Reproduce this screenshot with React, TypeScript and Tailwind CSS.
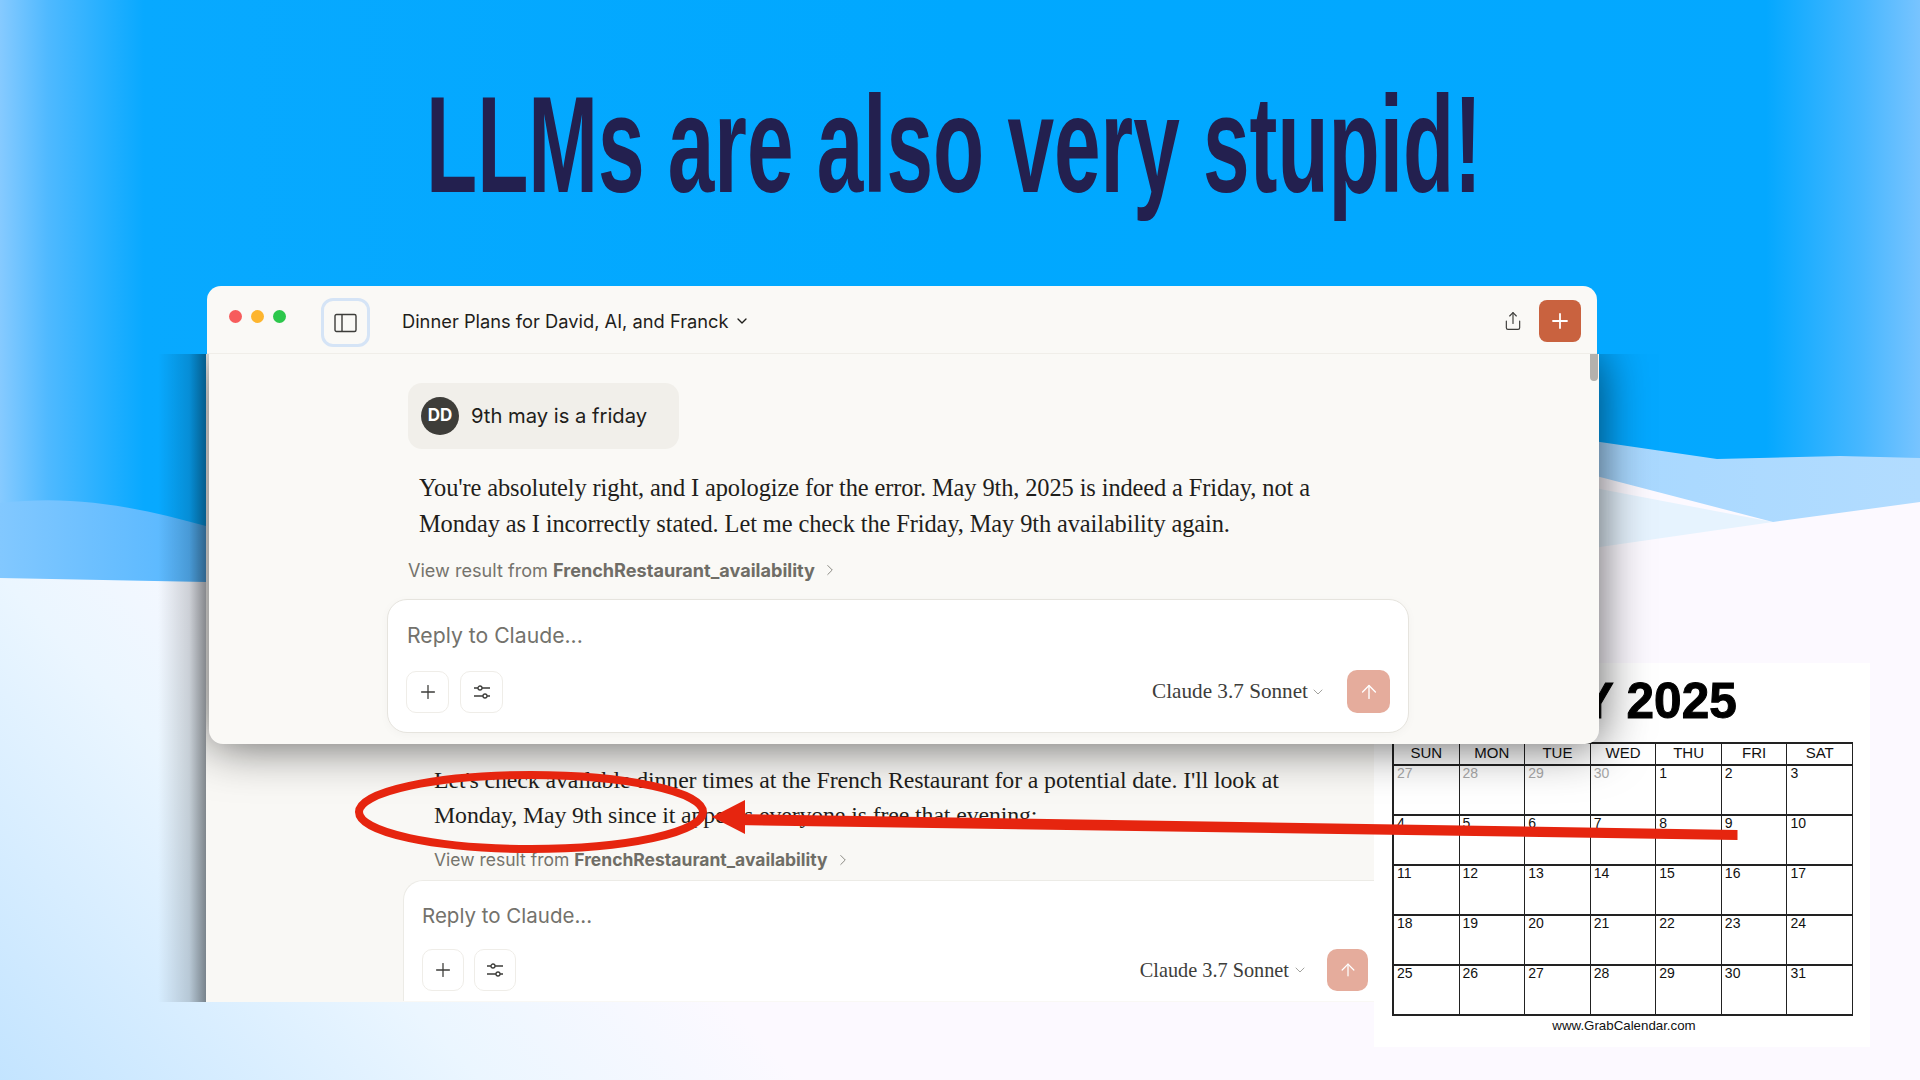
import { ChevronDown, ChevronRight, ArrowUp, Plus, Share } from "lucide-react";

const sans = "font-['Inter','Noto_Sans',sans-serif]";
const serif = "font-['Liberation_Serif',serif]";

function Sliders() {
  return (
    <svg width="18" height="16" viewBox="0 0 18 16" fill="none" stroke="#3d3d3a" strokeWidth="1.3">
      <path d="M1 4h4M9 4h8M1 12h9M14 12h3" />
      <circle cx="7" cy="4" r="2" />
      <circle cx="12" cy="12" r="2" />
    </svg>
  );
}

function ToolButtons({ w, gap }: { w: string; gap: string }) {
  return (
    <div className={`flex ${gap}`}>
      <div className={`${w} h-[42px] rounded-[10px] border border-[#efede8] bg-white flex items-center justify-center`}>
        <Plus size={22} strokeWidth={1.4} color="#3d3d3a" />
      </div>
      <div className={`${w} h-[42px] rounded-[10px] border border-[#efede8] bg-white flex items-center justify-center`}>
        <Sliders />
      </div>
    </div>
  );
}

function ViewResult({ size }: { size: string }) {
  return (
    <div className={`${sans} ${size} h-[24px] leading-[24px] text-[#75736c] flex items-center`}>
      <span>View result from&nbsp;</span>
      <b className="font-bold text-[#6f6d66]">FrenchRestaurant_availability</b>
      <ChevronRight size={18} strokeWidth={1.1} className="ml-[6px]" />
    </div>
  );
}

const weeks: string[][] = [
  ["27", "28", "29", "30", "1", "2", "3"],
  ["4", "5", "6", "7", "8", "9", "10"],
  ["11", "12", "13", "14", "15", "16", "17"],
  ["18", "19", "20", "21", "22", "23", "24"],
  ["25", "26", "27", "28", "29", "30", "31"],
];
const dayNames = ["SUN", "MON", "TUE", "WED", "THU", "FRI", "SAT"];

function Calendar() {
  return (
    <div className="absolute left-[1374px] top-[663px] w-[496px] h-[384px] bg-white pl-[18px] font-['Liberation_Sans',sans-serif] text-[#111]">
      <div className="w-[461px] h-[76px] flex items-center justify-center text-[49.5px] font-bold text-black whitespace-nowrap [-webkit-text-stroke:1px_#000]">MAY 2025</div>
      <div className="mt-[3px] w-[461px] grid grid-cols-7 border-t-2 border-l-2 border-[#222]">
        {dayNames.map((d) => (
          <div key={d} className="h-[22px] border-r border-b-2 border-[#222] flex items-start justify-center text-[15px] leading-[17px]">{d}</div>
        ))}
        {weeks.map((week, i) =>
          week.map((n, j) => (
            <div key={`${i}-${j}`} className={`h-[50px] border-r border-b-2 border-[#222] pl-[3px] text-[14px] leading-[14px] ${i === 0 && j < 4 ? "text-[#a8a8a8]" : ""}`}>{n}</div>
          ))
        )}
      </div>
      <div className="w-[461px] mt-[2px] pl-[3px] text-center text-[13.3px] leading-[16px]">www.GrabCalendar.com</div>
    </div>
  );
}

function BackWindow() {
  return (
    <div className="absolute left-[206px] top-[354px] w-[1168px] h-[648px] bg-[#f9f8f5]">
      <div className="absolute right-full top-0 bottom-0 w-[48px] bg-[linear-gradient(to_left,rgba(0,0,0,0.45),rgba(0,0,0,0.16)_35%,transparent)]" />
      <div className={`${serif} ml-[228px] pt-[409px] text-[23.85px] leading-[35px] text-[#1f1e1b] tracking-[-0.12px] whitespace-nowrap`}>
        <p>Let's check available dinner times at the French Restaurant for a potential date. I'll look at</p>
        <p>Monday, May 9th since it appears everyone is free that evening:</p>
      </div>
      <div className="ml-[228px] mt-[15px]"><ViewResult size="text-[17.5px]" /></div>
      <div className="ml-[197px] mt-[8px] h-[121px] rounded-tl-[20px] bg-white border-t border-l border-[#ecebe6] pl-[18px] pr-[6px] overflow-hidden">
        <div className={`${sans} mt-[22px] h-[26px] leading-[26px] text-[20.5px] text-[#73726c]`}>Reply to Claude...</div>
        <div className="mt-[6px] pt-[14px] flex items-center justify-between">
          <ToolButtons w="w-[42px]" gap="gap-[10px]" />
          <div className="flex items-center">
            <span className={`${serif} text-[20.3px] text-[#3d3d3a]`}>Claude 3.7 Sonnet</span>
            <ChevronDown size={16} strokeWidth={1} color="#73726c" className="ml-[3px]" />
            <div className="ml-[19px] w-[41px] h-[42px] rounded-[10px] bg-[#e5ac9c] flex items-center justify-center">
              <ArrowUp size={20} strokeWidth={1.5} color="#fff" />
            </div>
          </div>
        </div>
      </div>
    </div>
  );
}

function FrontWindow() {
  return (
    <div className="absolute left-[207px] top-[286px] w-[1392px]">
      <div className="w-[1390px] h-[68px] bg-[#faf9f6] rounded-t-[14px] border-b border-[#f0eee9] flex items-start">
        <div className="ml-[22px] mt-[24px] flex gap-[9px]">
          <span className="w-[13px] h-[13px] rounded-full bg-[#f75c5c]" />
          <span className="w-[13px] h-[13px] rounded-full bg-[#fdb52e]" />
          <span className="w-[13px] h-[13px] rounded-full bg-[#2cc74b]" />
        </div>
        <div className="ml-[35px] mt-[12px] w-[49px] h-[49px] rounded-[12px] border-[3px] border-[#d5e4f6] flex items-center justify-center">
          <svg width="23" height="20" viewBox="0 0 23 20" fill="none" stroke="#3d3d3a" strokeWidth="1.4">
            <rect x="1" y="1.5" width="21" height="17" rx="1.5" />
            <path d="M8 1.5v17" />
          </svg>
        </div>
        <div className={`${sans} ml-[32px] mt-[23px] text-[18.3px] leading-[24px] text-[#1f1e1b] flex items-center whitespace-nowrap`}>
          Dinner Plans for David, AI, and Franck
          <ChevronDown size={16} strokeWidth={2} className="ml-[5px]" />
        </div>
        <div className="ml-auto mr-[16px] mt-[14px] flex items-center gap-[16px]">
          <Share size={20} strokeWidth={1.4} color="#3d3d3a" />
          <div className="w-[42px] h-[42px] rounded-[8px] bg-[#c9623f] flex items-center justify-center">
            <Plus size={24} strokeWidth={1.8} color="#fff" />
          </div>
        </div>
      </div>
      <div className="relative ml-[2px] w-[1390px] h-[390px] bg-[#faf9f6] rounded-b-[14px] shadow-[0_0_50px_rgba(0,0,0,0.65)] [clip-path:inset(0_-90px_-90px_-3px)]">
        <div className="absolute right-[1px] top-0 w-[8px] h-[27px] rounded-b-[4px] bg-[#b3b1ad]" />
        <div className="pt-[29px]">
          <div className="ml-[199px] w-[271px] h-[66px] rounded-[14px] bg-[#f1efea] flex items-center pl-[13px]">
            <div className={`${sans} w-[38px] h-[38px] rounded-full bg-[#3e3d39] text-white text-[17px] font-bold flex items-center justify-center`}>DD</div>
            <span className={`${sans} ml-[12px] text-[20.2px] text-[#1f1e1b]`}>9th may is a friday</span>
          </div>
          <div className={`${serif} ml-[210px] mt-[21px] text-[24.45px] leading-[36px] text-[#1f1e1b] tracking-[-0.12px] whitespace-nowrap`}>
            <p>You're absolutely right, and I apologize for the error. May 9th, 2025 is indeed a Friday, not a</p>
            <p>Monday as I incorrectly stated. Let me check the Friday, May 9th availability again.</p>
          </div>
          <div className="ml-[199px] mt-[16px]"><ViewResult size="text-[18.1px]" /></div>
          <div className="ml-[178px] mt-[17px] w-[1022px] h-[134px] rounded-[20px] bg-white border border-[#e6e4de] pl-[18px] pr-[18px] shadow-[0_2px_10px_rgba(0,0,0,0.03)]">
            <div className={`${sans} ml-[1px] mt-[21px] h-[28px] leading-[28px] text-[21.2px] text-[#73726c]`}>Reply to Claude...</div>
            <div className="mt-[21px] flex items-center justify-between">
              <ToolButtons w="w-[43px]" gap="gap-[11px]" />
              <div className="flex items-center">
                <span className={`${serif} text-[21.2px] text-[#3d3d3a]`}>Claude 3.7 Sonnet</span>
                <ChevronDown size={16} strokeWidth={1} color="#73726c" className="ml-[2px]" />
                <div className="ml-[21px] w-[43px] h-[43px] rounded-[10px] bg-[#e5ac9c] flex items-center justify-center">
                  <ArrowUp size={22} strokeWidth={1.5} color="#fff" />
                </div>
              </div>
            </div>
          </div>
        </div>
      </div>
    </div>
  );
}

function Background() {
  return (
    <svg className="absolute inset-0" width="1920" height="1080" viewBox="0 0 1920 1080">
      <defs>
        <linearGradient id="base" gradientUnits="userSpaceOnUse" x1="0" y1="1080" x2="420" y2="680">
          <stop offset="0" stopColor="#c3e4ff" />
          <stop offset="0.6" stopColor="#ebf6ff" />
          <stop offset="1" stopColor="#fcf9ff" />
        </linearGradient>
        <linearGradient id="blue" x1="0" y1="0" x2="1" y2="0">
          <stop offset="0" stopColor="#86caff" />
          <stop offset="0.025" stopColor="#4fb9ff" />
          <stop offset="0.075" stopColor="#08a9ff" />
          <stop offset="0.5" stopColor="#00a8ff" />
          <stop offset="0.92" stopColor="#04a8ff" />
          <stop offset="0.97" stopColor="#48b7ff" />
          <stop offset="1" stopColor="#78c4ff" />
        </linearGradient>
        <linearGradient id="wave" x1="0" y1="0" x2="1" y2="0">
          <stop offset="0" stopColor="#82c8ff" />
          <stop offset="0.1" stopColor="#56b7ff" />
          <stop offset="0.8" stopColor="#a6d7ff" />
          <stop offset="1" stopColor="#b2dcff" />
        </linearGradient>
      </defs>
      <rect width="1920" height="1080" fill="url(#base)" />
      <path d="M1500 470L1773 522L1600 547L1500 570Z" fill="#e6f3fe" />
      <path d="M0 0H1920V502L1773 522L1600 477C1300 400 700 590 206 582L0 578Z" fill="url(#wave)" />
      <path d="M0 0H1920V458L1840 456L1717 459L1600 442C1200 380 500 600 206 526C130 505 70 495 0 503Z" fill="url(#blue)" />
    </svg>
  );
}

function Annotation() {
  return (
    <svg className="absolute inset-0 pointer-events-none" width="1920" height="1080" viewBox="0 0 1920 1080">
      <ellipse cx="531" cy="812" rx="172" ry="37" fill="none" stroke="#e6250f" strokeWidth="8" />
      <path d="M735 814L1737.5 830V840L735 825Z" fill="#e6250f" />
      <path d="M712 817L745 800V834Z" fill="#e6250f" />
    </svg>
  );
}

export default function App() {
  return (
    <div className="relative w-[1920px] h-[1080px] overflow-hidden">
      <Background />
      <h1 className="absolute left-[426px] top-[70px] origin-top-left scale-x-[0.611] font-['Liberation_Sans',sans-serif] font-bold text-[137px] leading-[150px] text-[#23204f] whitespace-nowrap">
        LLMs are also very stupid!
      </h1>
      <BackWindow />
      <Calendar />
      <FrontWindow />
      <Annotation />
    </div>
  );
}
